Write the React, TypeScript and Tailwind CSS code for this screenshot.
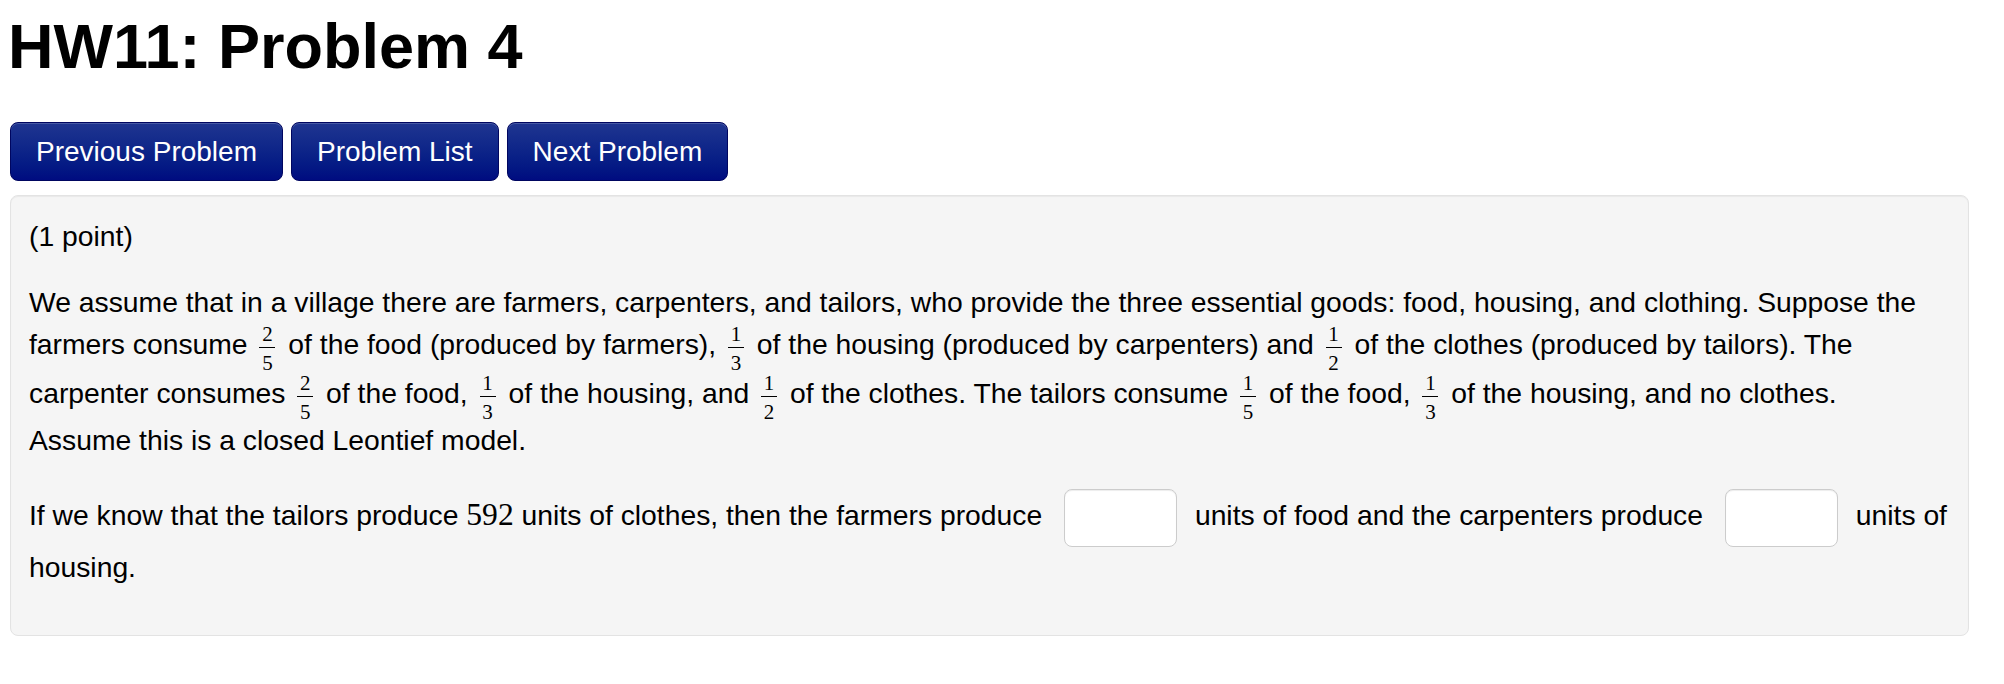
import { type ReactNode } from 'react';

function Frac({ n, d }: { n: ReactNode; d: ReactNode }) {
    return (
        <span className="inline-block w-[16px] ml-[4px] mr-[5px] align-[-16px] text-center font-['Liberation_Serif',serif] text-[21px]">
            <span className="block pt-[3px] leading-[18px]">{n}</span>
            <span className="block mt-[4px] h-px bg-black" />
            <span className="block mt-[8px] leading-[15px]">{d}</span>
        </span>
    );
}

function NavButton({ children }: { children: ReactNode }) {
    return (
        <button className="h-[59px] px-[25px] rounded-[8px] border border-[#000660] bg-gradient-to-b from-[#1f3590] to-[#000b80] text-white text-[28px] leading-[57px] shadow-[inset_0_1px_0_rgba(255,255,255,0.18)]">
            {children}
        </button>
    );
}

function AnswerBox() {
    return (
        <input
            type="text"
            className="inline-block align-middle w-[113px] h-[58px] ml-[14px] mr-[10px] bg-white border border-[#cccccc] rounded-[8px] shadow-[inset_0_1px_1px_rgba(0,0,0,0.075)] outline-none"
        />
    );
}

export default function App() {
    return (
        <div className="min-h-screen bg-white text-black pl-[10px] pr-[35px] font-['Liberation_Sans',Helvetica,Arial,sans-serif]">
            <h1 className="pt-[12px] -ml-[2px] text-[63px] leading-[69px] font-bold">HW11: Problem 4</h1>

            <div className="mt-[41px] flex gap-[8px]">
                <NavButton>Previous Problem</NavButton>
                <NavButton>Problem List</NavButton>
                <NavButton>Next Problem</NavButton>
            </div>

            <div className="mt-[14px] bg-[#f5f5f5] border border-[#e3e3e3] rounded-[8px] shadow-[inset_0_1px_1px_rgba(0,0,0,0.05)] pt-[20px] pb-[48px] px-[18px] text-[28.3px] leading-[40px]">
                <div>(1 point)</div>

                <p className="mt-[26px]">
                    We assume that in a village there are farmers, carpenters, and tailors, who provide the three
                    essential goods: food, housing, and clothing. Suppose the farmers consume <Frac n="2" d="5" /> of
                    the food (produced by farmers), <Frac n="1" d="3" /> of the housing (produced by carpenters) and{' '}
                    <Frac n="1" d="2" /> of the clothes (produced by tailors). The carpenter consumes{' '}
                    <Frac n="2" d="5" /> of the food, <Frac n="1" d="3" /> of the housing, and <Frac n="1" d="2" /> of
                    the clothes. The tailors consume <Frac n="1" d="5" /> of the food, <Frac n="1" d="3" /> of the
                    housing, and no clothes.
                    <br />
                    Assume this is a closed Leontief model.
                </p>

                <p className="mt-[29px]">
                    If we know that the tailors produce{' '}
                    <span className="font-['Liberation_Serif',serif] text-[31.6px] leading-none">592</span> units of
                    clothes, then the farmers produce <AnswerBox /> units of food and the carpenters produce{' '}
                    <AnswerBox /> units of housing.
                </p>
            </div>
        </div>
    );
}
